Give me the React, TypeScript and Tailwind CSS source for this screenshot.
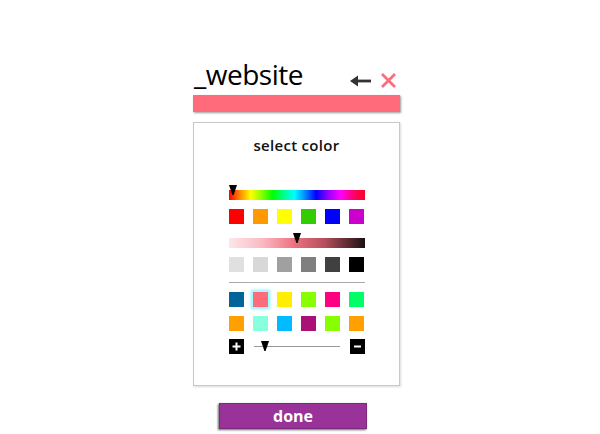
import React from "react";

const Swatch = ({ c, sel }: { c: string; sel?: boolean }) => (
  <div
    className={sel ? "w-[15px] h-[15px] shadow-[0_0_0_1px_#9ff,0_0_3px_2px_#8ef]" : "w-[15px] h-[15px]"}
    style={{ backgroundColor: c }}
  />
);

const Row = ({ colors, selIndex }: { colors: string[]; selIndex?: number }) => (
  <div className="flex gap-[9px]">
    {colors.map((c, i) => (
      <Swatch key={i} c={c} sel={i === selIndex} />
    ))}
  </div>
);

const Marker = () => (
  <svg width="8" height="10" viewBox="0 0 8 10">
    <path d="M0 0 L8 0 L4.6 10 L3.4 10 Z" fill="#000" />
  </svg>
);

export default function App() {
  return (
    <div className="w-[600px] h-[434px] bg-white overflow-hidden" style={{ fontFamily: "'Open Sans', sans-serif" }}>
      <div className="ml-[193px] w-[207px] pt-[60px] flex flex-col">
        <div className="flex items-end justify-between h-[28px]">
          <div className="text-[28px] leading-none text-black ml-[1px] tracking-[-0.5px]">_website</div>
          <div className="flex items-end gap-[9px] pr-[3px] -mb-[1px]">
            <svg width="21" height="12" viewBox="0 0 21 12" className="mb-[2px]">
              <path d="M0 6 L8 0.5 L8 11.5 Z" fill="#333" />
              <rect x="6" y="4.6" width="15" height="2.8" fill="#333" />
            </svg>
            <svg width="17" height="17" viewBox="0 0 17 17">
              <path d="M2 2 L15 15 M15 2 L2 15" stroke="#ff6b7a" strokeWidth="2.8" strokeLinecap="butt" />
            </svg>
          </div>
        </div>
        <div className="mt-[7px] h-[17px] bg-[#ff6b7a] border border-[#999] shadow-[1px_1px_2px_rgba(0,0,0,0.4)]" />
        <div className="mt-[10px] h-[264px] border border-[#c8c8c8] shadow-[1px_1px_2px_rgba(0,0,0,0.15)] flex flex-col items-center pt-[13px]">
          <div className="text-[15px] leading-[19px] font-semibold text-[#111] tracking-[0.3px]">select color</div>
          <div className="w-[136px] mt-[35px] flex flex-col">
            <div className="relative h-[10px] bg-[linear-gradient(to_right,#ff0000_0%,#ff8800_8%,#ffff00_16%,#88ff00_24%,#00ff00_32%,#00ff88_40%,#00ffff_48%,#0088ff_56%,#0000ff_64%,#8800ff_72%,#ff00ff_82%,#ff0066_92%,#ff0022_100%)]">
              <div className="absolute left-[0px] -top-[5px]"><Marker /></div>
            </div>
            <div className="mt-[9px]">
              <Row colors={["#ff0000", "#ff9900", "#ffff00", "#33cc00", "#0000ff", "#cc00cc"]} />
            </div>
            <div className="relative mt-[14px] h-[10px] bg-[linear-gradient(to_right,#fde6ea_0%,#f9b9c2_25%,#ee7080_48%,#b5505e_70%,#5a2a30_88%,#1a1012_100%)]">
              <div className="absolute left-[64px] -top-[5px]"><Marker /></div>
            </div>
            <div className="mt-[9px]">
              <Row colors={["#e0e0e0", "#d8d8d8", "#a0a0a0", "#7f7f7f", "#404040", "#000000"]} />
            </div>
            <div className="mt-[10px] h-[1px] bg-[#aaaaaa]" />
            <div className="mt-[9px]">
              <Row colors={["#006699", "#ff6b7a", "#ffee00", "#88ff00", "#ff0080", "#00ff66"]} selIndex={1} />
            </div>
            <div className="mt-[9px]">
              <Row colors={["#ffa000", "#88ffdd", "#00bbff", "#aa1177", "#88ff00", "#ffa000"]} />
            </div>
            <div className="mt-[8px] flex items-center">
              <div className="w-[15px] h-[15px] bg-black flex items-center justify-center">
                <svg width="11" height="11" viewBox="0 0 11 11">
                  <path d="M1.5 5.5 H9.5 M5.5 1.5 V9.5" stroke="#fff" strokeWidth="2" />
                </svg>
              </div>
              <div className="relative flex-1 mx-[10px] h-[1px] bg-[#999]">
                <div className="absolute left-[7px] -top-[5px]"><Marker /></div>
              </div>
              <div className="w-[15px] h-[15px] bg-black flex items-center justify-center">
                <svg width="11" height="11" viewBox="0 0 11 11">
                  <path d="M2 5.5 H9" stroke="#fff" strokeWidth="2" />
                </svg>
              </div>
            </div>
          </div>
        </div>
        <div className="mt-[17px] ml-[26px] w-[148px] h-[26px] bg-[#993399] shadow-[-1px_1px_2px_rgba(0,0,0,0.6)] border border-[#7a2a7a] flex items-center justify-center">
          <span className="text-white text-[16px] font-bold leading-none">done</span>
        </div>
      </div>
    </div>
  );
}
